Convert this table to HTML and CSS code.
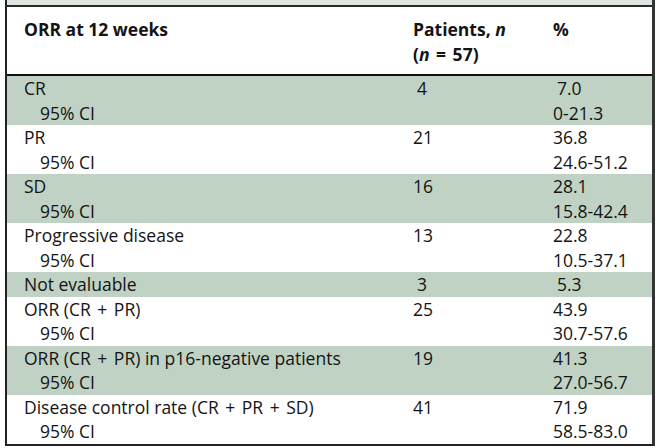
FILE: index.html
```html
<!DOCTYPE html>
<html>
<head>
<meta charset="utf-8">
<link rel="stylesheet" href="styles.css">
</head>
<body>
<div class="table">
  <div class="strip"></div>
  <div class="row head">
    <div class="c1">ORR at 12 weeks</div>
    <div class="c2">Patients, <i>n</i><br>(<i>n</i> <span class="op">=</span> 57)</div>
    <div class="c3">%</div>
  </div>
  <div class="row shade">
    <div class="c1">CR<br><span class="ind">95% CI</span></div>
    <div class="c2"><span class="sp">4</span></div>
    <div class="c3"><span class="sp">7.0</span><br>0-21.3</div>
  </div>
  <div class="row">
    <div class="c1">PR<br><span class="ind">95% CI</span></div>
    <div class="c2">21</div>
    <div class="c3">36.8<br>24.6-51.2</div>
  </div>
  <div class="row shade">
    <div class="c1">SD<br><span class="ind">95% CI</span></div>
    <div class="c2">16</div>
    <div class="c3">28.1<br>15.8-42.4</div>
  </div>
  <div class="row">
    <div class="c1">Progressive disease<br><span class="ind">95% CI</span></div>
    <div class="c2">13</div>
    <div class="c3">22.8<br>10.5-37.1</div>
  </div>
  <div class="row shade">
    <div class="c1">Not evaluable</div>
    <div class="c2"><span class="sp">3</span></div>
    <div class="c3"><span class="sp">5.3</span></div>
  </div>
  <div class="row">
    <div class="c1">ORR (CR <span class="op">+</span> PR)<br><span class="ind">95% CI</span></div>
    <div class="c2">25</div>
    <div class="c3">43.9<br>30.7-57.6</div>
  </div>
  <div class="row shade">
    <div class="c1">ORR (CR <span class="op">+</span> PR) in p16-negative patients<br><span class="ind">95% CI</span></div>
    <div class="c2">19</div>
    <div class="c3">41.3<br>27.0-56.7</div>
  </div>
  <div class="row last">
    <div class="c1">Disease control rate (CR <span class="op">+</span> PR <span class="op">+</span> SD)<br><span class="ind">95% CI</span></div>
    <div class="c2">41</div>
    <div class="c3">71.9<br>58.5-83.0</div>
  </div>
</div>
</body>
</html>
```

FILE: styles.css
```css
html, body {
  margin: 0;
  padding: 0;
  background: #ffffff;
}
body {
  font-family: "Open Sans", "Liberation Sans", sans-serif;
  font-size: 17.5px;
  color: #141414;
}
.table {
  margin-left: 5px;
  width: 645px;
  border-left: 2px solid #222;
  border-right: 3px solid #333;
  border-bottom: 2px solid #222;
}
.strip {
  height: 5px;
  background: #dde6df;
  border-bottom: 2px solid #2a2a2a;
}
.row {
  display: grid;
  grid-template-columns: 406px 140px 1fr;
  line-height: 24.5px;
}
.row.head {
  font-weight: bold;
  padding: 10px 0 8px;
  border-bottom: 2px solid #111;
}
.shade {
  background: #c0d2c4;
}
.c1 {
  padding-left: 17px;
}
.ind {
  padding-left: 16px;
}
.sp {
  padding-left: 4px;
}
.op {
  padding: 0 2px;
}
i {
  font-style: italic;
}
```
